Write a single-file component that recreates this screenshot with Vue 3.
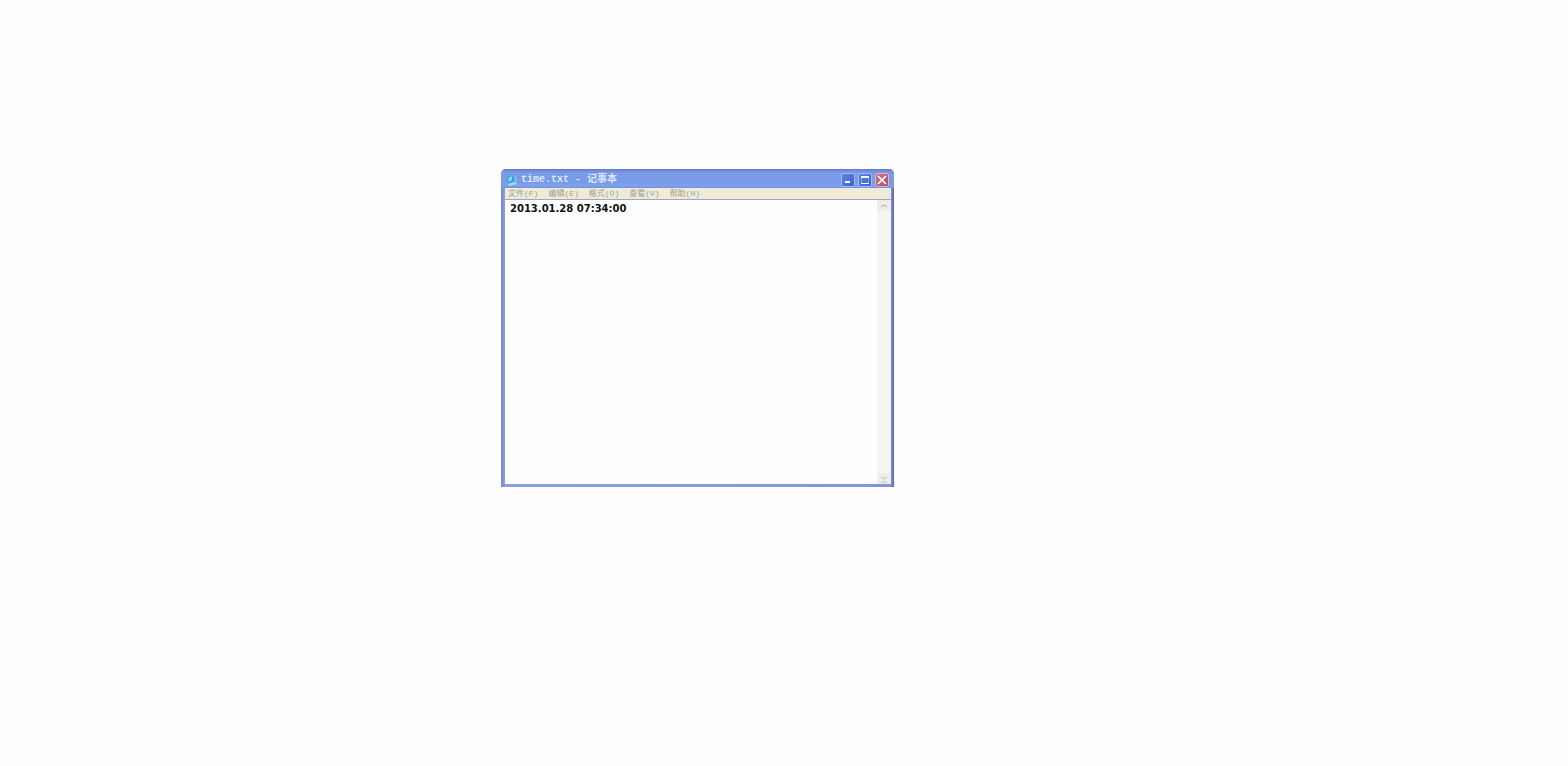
<script setup>
import { ref } from 'vue'

const menus = ['文件(F)', '编辑(E)', '格式(O)', '查看(V)', '帮助(H)']
const content = ref('2013.01.28 07:34:00')
</script>

<template>
  <main class="desktop">
    <section class="window" aria-label="time.txt - 记事本">
      <header class="titlebar">
        <svg class="app-icon" viewBox="0 0 12 12" aria-hidden="true">
          <path d="M2 1h7l2 2v7H2z" fill="#69aeea" />
          <path d="M1 3l5-2 2 2v6l-6 1z" fill="#3f9de0" />
          <path d="M2 4l4-2v4L3 8z" fill="#7fd8ee" />
          <path d="M2 10l6-2 3 2-8 2z" fill="#a9d9f2" />
          <path d="M8 2l2 2v5" fill="none" stroke="#8ec4f5" />
        </svg>
        <h1 class="title">time.txt - 记事本</h1>
        <div class="controls">
          <button type="button" class="control" aria-label="最小化">
            <svg viewBox="0 0 12 12"><path d="M3 7h5v2H3z" fill="#fff" /></svg>
          </button>
          <button type="button" class="control" aria-label="最大化">
            <svg viewBox="0 0 12 12">
              <path d="M2 2h8v2H2zM2 9h8v1H2z" fill="#f4f8ff" />
              <path d="M2 4h1v5H2zM9 4h1v5H9z" fill="#7f9eec" />
            </svg>
          </button>
          <button type="button" class="control close" aria-label="关闭">
            <svg viewBox="0 0 12 12">
              <path d="M2 2l8 8M10 2l-8 8" stroke="#fff" stroke-width="1.7" />
            </svg>
          </button>
        </div>
      </header>
      <nav class="menubar">
        <button v-for="menu in menus" :key="menu" type="button" class="menu">{{ menu }}</button>
      </nav>
      <div class="editor">
        <textarea v-model="content" class="text" aria-label="文本" spellcheck="false"></textarea>
        <div class="scrollbar">
          <button type="button" class="arrow" aria-label="向上滚动">
            <svg viewBox="0 0 12 8"><path d="M3 5l3-2 3 2" fill="none" stroke="#c3c3bb" stroke-width="1.5" /></svg>
          </button>
          <button type="button" class="arrow" aria-label="向下滚动">
            <svg viewBox="0 0 12 8"><path d="M3 2l3 2 3-2M3 7h6" fill="none" stroke="#c3c3bb" /></svg>
          </button>
        </div>
      </div>
    </section>
  </main>
</template>

<style>
body {
  margin: 0;
  background: #fefefe;
}
</style>

<style scoped>
.desktop {
  display: grid;
  grid-template-columns: 501fr 393fr 674fr;
  padding-top: 169px;
}

.window {
  grid-column: 2;
  box-sizing: border-box;
  min-width: 0;
  padding: 0 3px 3px 4px;
  border-radius: 5px 5px 0 0;
  background: linear-gradient(90deg, #7488cc, #8aa0e2 4px, #8294d8 calc(100% - 3px), #5a5fae);
}

.titlebar {
  display: flex;
  align-items: center;
  box-sizing: border-box;
  height: 19px;
  margin: 0 -3px 0 -4px;
  padding: 2px 5px 0;
  border-radius: 5px 5px 0 0;
  background: linear-gradient(#5f78c6, #7390dc 2px, #7d9de9 5px, #7799e6 12px, #7fa2ec 17px, #6f8fd6);
}

.app-icon {
  width: 12px;
  height: 12px;
}

.title {
  flex: 1;
  margin: 0 0 0 3px;
  font: 700 10px/16px "Liberation Mono", "Noto Sans CJK SC", monospace;
  color: #dce7ff;
  white-space: nowrap;
}

.controls {
  display: flex;
  gap: 3px;
}

.control {
  width: 14px;
  height: 14px;
  padding: 0;
  border: 1px solid #a5bcf3;
  border-radius: 2px;
  background: linear-gradient(135deg, #5f83e6, #3c62d2);
}

.control svg {
  display: block;
  width: 12px;
  height: 12px;
}

.close {
  border-color: #d9b3d2;
  background: linear-gradient(135deg, #cc7687, #b54a62);
}

.menubar {
  display: flex;
  gap: 10px;
  height: 11px;
  padding-left: 3px;
  border-bottom: 1px solid #a3a6b8;
  background: #eeebda;
}

.menu {
  padding: 0;
  border: 0;
  background: none;
  font: 8px/11px "Liberation Mono", "Noto Sans CJK SC", monospace;
  color: #a3a08c;
  white-space: nowrap;
}

.editor {
  display: flex;
  height: 284px;
  background: #fefefe;
}

.text {
  flex: 1;
  min-width: 0;
  box-sizing: border-box;
  padding: 2px 5px;
  border: 0;
  outline: 0;
  resize: none;
  overflow: hidden;
  background: transparent;
  font: 700 10px/14px "DejaVu Sans", sans-serif;
  color: #111;
}

.scrollbar {
  display: flex;
  flex-direction: column;
  justify-content: space-between;
  width: 14px;
  background: #f6f6f1;
}

.arrow {
  height: 11px;
  padding: 1px;
  border: 0;
  border-radius: 2px;
  background: #eeeeea;
}

.arrow svg {
  display: block;
  width: 12px;
  height: 8px;
}
</style>
